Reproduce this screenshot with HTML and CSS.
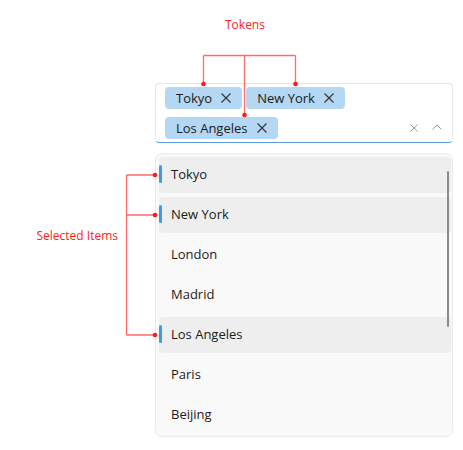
FILE: index.html
```html
<!DOCTYPE html>
<html>
<head>
<meta charset="utf-8">
<link rel="stylesheet" href="styles.css">
</head>
<body>
<div class="stage">
  <div class="combo">
    <div class="input">
      <div class="tokens">
        <span class="token">Tokyo<svg class="tx" viewBox="0 0 12 12"><path d="M1.5 1.5L10.5 10.5M10.5 1.5L1.5 10.5"/></svg></span>
        <span class="token">New York<svg class="tx" viewBox="0 0 12 12"><path d="M1.5 1.5L10.5 10.5M10.5 1.5L1.5 10.5"/></svg></span>
        <span class="token">Los Angeles<svg class="tx" viewBox="0 0 12 12"><path d="M1.5 1.5L10.5 10.5M10.5 1.5L1.5 10.5"/></svg></span>
      </div>
      <div class="actions">
        <svg class="clear" viewBox="0 0 8 8"><path d="M0.5 0.5L7.5 7.5M7.5 0.5L0.5 7.5"/></svg>
        <svg class="chev" viewBox="0 0 10 6"><path d="M0.5 5.5L5 1L9.5 5.5"/></svg>
      </div>
    </div>
    <div class="popup">
      <div class="list">
        <div class="item sel">Tokyo</div>
        <div class="item sel">New York</div>
        <div class="item">London</div>
        <div class="item">Madrid</div>
        <div class="item sel">Los Angeles</div>
        <div class="item">Paris</div>
        <div class="item">Beijing</div>
      </div>
      <div class="scroll"></div>
    </div>
  </div>

  <svg class="notes" width="463" height="450" viewBox="0 0 463 450">
    <g class="ln">
      <path d="M203.5 55.5H295.5M203.5 55.5V84M295.5 55.5V84M244.5 55.5V115"/>
      <path d="M126.5 175H155M126.5 215H155M126.5 335H155M126.5 175V335"/>
    </g>
    <g class="dot">
      <circle cx="203.5" cy="84" r="2.3"/>
      <circle cx="295.5" cy="84" r="2.3"/>
      <circle cx="244.5" cy="115" r="2.3"/>
      <circle cx="155" cy="175" r="2.3"/>
      <circle cx="155" cy="215" r="2.3"/>
      <circle cx="155" cy="335" r="2.3"/>
    </g>
  </svg>
  <div class="label label-tokens">Tokens</div>
  <div class="label label-sel">Selected Items</div>
</div>
</body>
</html>
```
FILE: styles.css
```css
html, body {
  margin: 0;
  padding: 0;
  background: #ffffff;
}
body {
  font-family: "Open Sans", "Noto Sans", sans-serif;
  color: #1b1b1b;
}
.stage {
  position: relative;
  width: 463px;
  height: 450px;
  overflow: hidden;
}
.combo {
  width: 298px;
  margin-left: 155px;
  padding-top: 83px;
}
.input {
  box-sizing: border-box;
  height: 60px;
  background: #ffffff;
  border: 1px solid #e6e6e6;
  border-bottom: 1px solid #5a9ad8;
  border-radius: 4px;
  padding: 3px 8px 3px 9px;
  display: flex;
  align-items: flex-end;
}
.tokens {
  flex: 1;
  display: flex;
  flex-wrap: wrap;
  column-gap: 4px;
  row-gap: 8px;
  align-content: flex-start;
  height: 52px;
}
.token {
  box-sizing: border-box;
  height: 22px;
  display: inline-flex;
  align-items: center;
  padding: 0 10px 0 11px;
  background: #b4d7f4;
  border-radius: 4px;
  font-size: 13px;
  line-height: 20px;
  color: #1b1b1b;
}
.tx {
  width: 12px;
  height: 12px;
  margin-left: 8px;
  fill: none;
  stroke: #333333;
  stroke-width: 1.1;
}
.actions {
  height: 22px;
  display: flex;
  align-items: center;
  gap: 14px;
  padding-right: 2px;
}
.clear {
  width: 8px;
  height: 8px;
  fill: none;
  stroke: #9a9a9a;
  stroke-width: 1;
}
.chev {
  width: 10px;
  height: 6px;
  margin-top: -2px;
  fill: none;
  stroke: #9a9a9a;
  stroke-width: 1;
}
.popup {
  position: relative;
  box-sizing: border-box;
  margin-top: 10px;
  height: 284px;
  background: #f9f9f9;
  border: 1px solid #ebebeb;
  border-radius: 7px;
  padding: 3px 1px 3px 3px;
}
.list {
  display: flex;
  flex-direction: column;
  gap: 4px;
}
.item {
  position: relative;
  box-sizing: border-box;
  height: 36px;
  display: flex;
  align-items: center;
  padding-left: 12px;
  padding-bottom: 3px;
  font-size: 13px;
  border-radius: 4px;
  color: #1b1b1b;
}
.item.sel {
  background: #eeeeee;
}
.item.sel::before {
  content: "";
  position: absolute;
  left: 0;
  top: 8px;
  width: 3px;
  height: 18px;
  border-radius: 2px;
  background: #3f9be6;
}
.scroll {
  position: absolute;
  left: 291px;
  top: 17px;
  width: 2px;
  height: 156px;
  border-radius: 1px;
  background: #8a8a8a;
}
.notes {
  position: absolute;
  left: 0;
  top: 0;
  pointer-events: none;
}
.ln path {
  fill: none;
  stroke: #ff6a6a;
  stroke-width: 1.3;
}
.dot circle {
  fill: #ff1a1a;
}
.label {
  position: absolute;
  color: #ff2020;
  font-size: 12px;
  line-height: 16px;
  white-space: nowrap;
}
.label-tokens {
  left: 225px;
  top: 17px;
}
.label-sel {
  right: 345px;
  top: 228px;
}
```
